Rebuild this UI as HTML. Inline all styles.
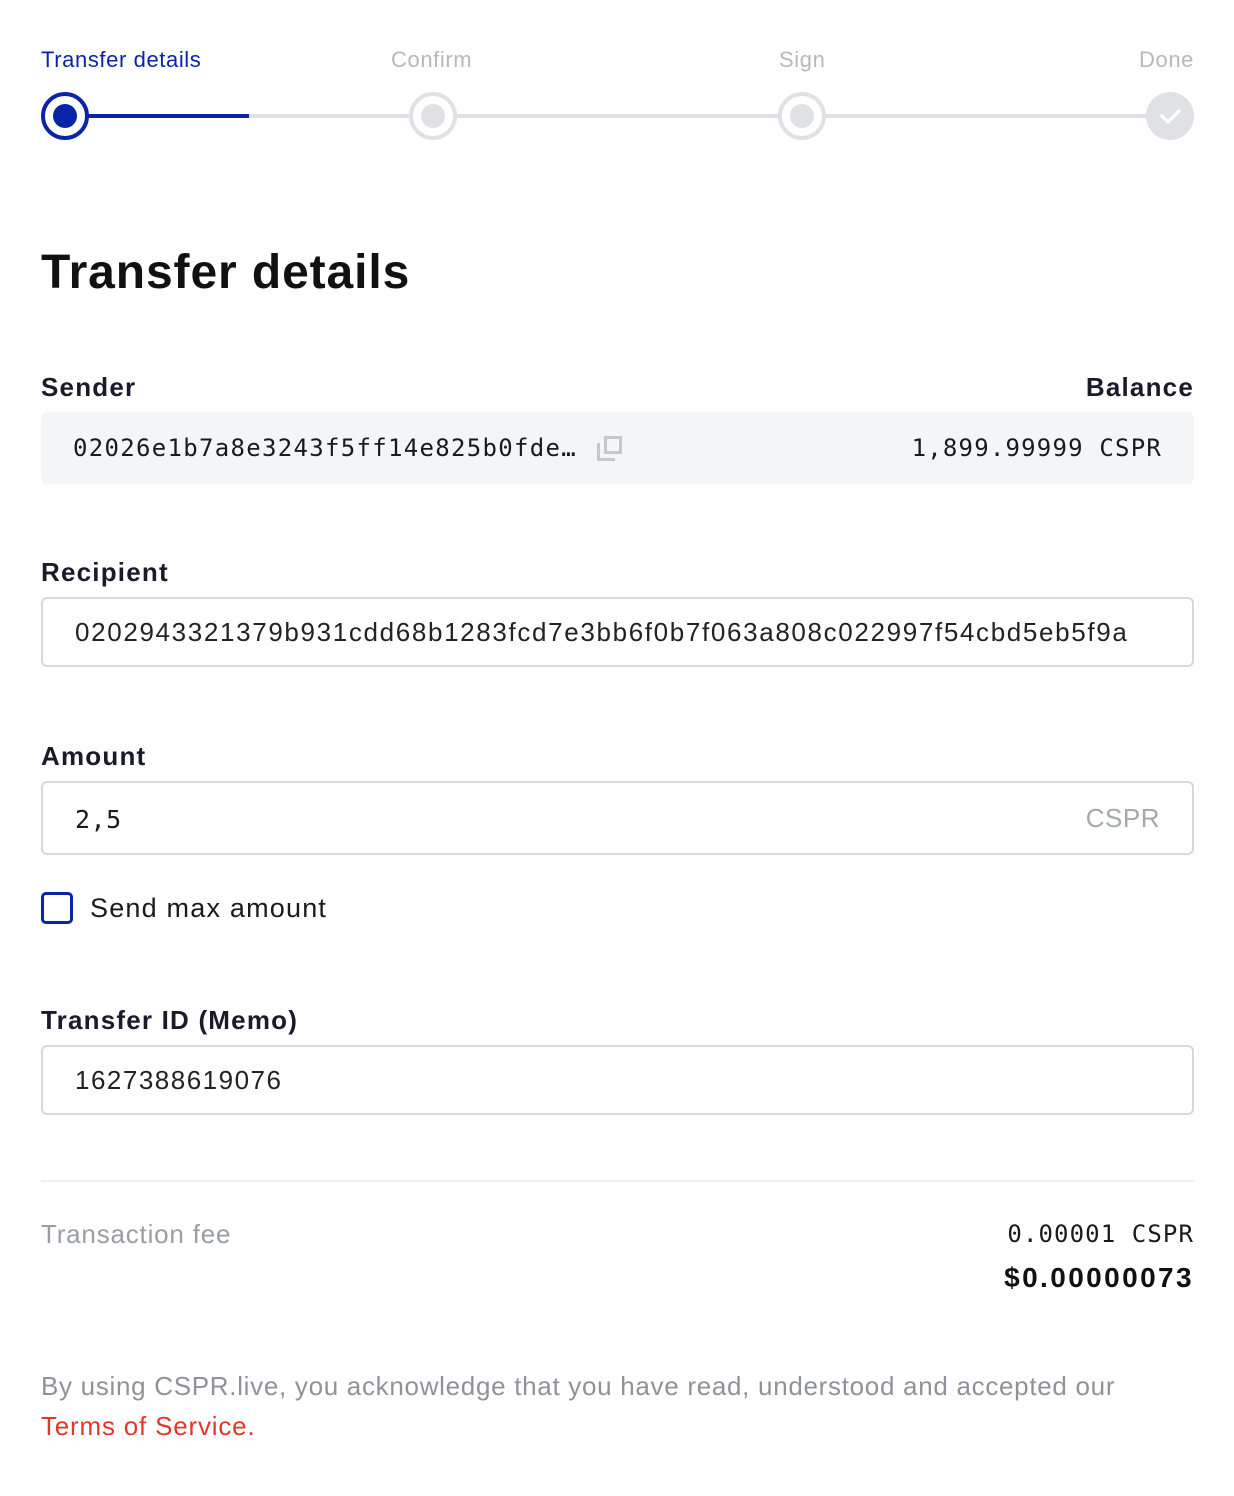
<!DOCTYPE html>
<html><head><style>
*{margin:0;padding:0;box-sizing:border-box}
body{width:1234px;height:1496px;background:#fff;font-family:"Liberation Sans",sans-serif;color:#1a1a1a;position:relative;overflow:hidden}
.a{position:absolute;white-space:nowrap}
.mono{font-family:"DejaVu Sans Mono","Liberation Mono",monospace}
.lbl{font-size:26px;font-weight:bold;color:#1a1a2a;letter-spacing:1.2px}
.inp{position:absolute;left:41px;width:1153px;border:2px solid #d6d8dc;border-radius:6px}
.step{position:absolute;top:92px;width:48px;height:48px;border-radius:50%;border:4px solid #dfe1e4;background:#fff}
.step i{position:absolute;left:8px;top:8px;width:24px;height:24px;border-radius:50%;background:#dfe1e4}
.sl{font-size:22px;letter-spacing:0.6px;top:47px}
</style></head><body>
<div class="a sl" style="left:41px;color:#0a24a8">Transfer details</div>
<div class="a sl" style="left:391px;color:#b5b8bd">Confirm</div>
<div class="a sl" style="left:779px;color:#b5b8bd">Sign</div>
<div class="a sl" style="right:40px;color:#b5b8bd">Done</div>
<div class="a" style="left:65px;top:114px;width:1105px;height:4px;background:#dfe1e4"></div>
<div class="a" style="left:65px;top:114px;width:184px;height:4px;background:#0a24a8"></div>
<div class="step" style="left:41px;border-color:#0a24a8"><i style="background:#0a24a8"></i></div>
<div class="step" style="left:409px"><i></i></div>
<div class="step" style="left:778px"><i></i></div>
<div class="step" style="left:1146px;background:#dfe1e4;border:none">
<svg width="48" height="48" viewBox="0 0 48 48" style="position:absolute;left:0;top:0"><path d="M16 24l6 6 11-11" stroke="#fff" stroke-width="3.5" fill="none" stroke-linecap="round" stroke-linejoin="round"/></svg></div>

<div class="a" style="left:41px;top:245px;font-size:48px;font-weight:bold;color:#111;letter-spacing:0.9px">Transfer details</div>

<div class="a lbl" style="left:41px;top:372px">Sender</div>
<div class="a lbl" style="right:40px;top:372px">Balance</div>
<div class="a" style="left:41px;top:412px;width:1153px;height:72px;background:#f4f5f7;border-radius:6px"></div>
<div class="a mono" style="left:73px;top:434px;font-size:24px;letter-spacing:1.3px">02026e1b7a8e3243f5ff14e825b0fde…</div>
<div class="a" style="left:597px;top:436px;width:26px;height:26px">
<div style="position:absolute;left:7px;top:0;width:18px;height:18px;border:3px solid #c5c7cb"></div>
<div style="position:absolute;left:0;top:7px;width:18px;height:18px;border:3px solid #c5c7cb;border-top:none;border-right:none"></div></div>
<div class="a mono" style="right:72px;top:434px;font-size:24px;letter-spacing:1.2px">1,899.99999 CSPR</div>

<div class="a lbl" style="left:41px;top:557px">Recipient</div>
<div class="inp" style="top:597px;height:70px"></div>
<div class="a" style="left:75px;top:617px;font-size:26px;color:#222;letter-spacing:1.65px">0202943321379b931cdd68b1283fcd7e3bb6f0b7f063a808c022997f54cbd5eb5f9a</div>

<div class="a lbl" style="left:41px;top:741px">Amount</div>
<div class="inp" style="top:781px;height:74px"></div>
<div class="a mono" style="left:75px;top:805px;font-size:25px;letter-spacing:0.5px">2,5</div>
<div class="a" style="right:74px;top:803px;font-size:26px;color:#a5a8ad;letter-spacing:0.5px">CSPR</div>

<div class="a" style="left:41px;top:892px;width:32px;height:32px;border:3px solid #0a24a8;border-radius:5px"></div>
<div class="a" style="left:90px;top:893px;font-size:27px;color:#1a1a1a;letter-spacing:1.2px">Send max amount</div>

<div class="a lbl" style="left:41px;top:1005px">Transfer ID (Memo)</div>
<div class="inp" style="top:1045px;height:70px"></div>
<div class="a" style="left:75px;top:1065px;font-size:26px;color:#222;letter-spacing:1.5px">1627388619076</div>

<div class="a" style="left:41px;top:1180px;width:1153px;height:2px;background:#eeeff1"></div>
<div class="a" style="left:41px;top:1219px;font-size:26px;color:#9a9da3;letter-spacing:0.8px">Transaction fee</div>
<div class="a mono" style="right:40px;top:1220px;font-size:24px;letter-spacing:1.1px">0.00001 CSPR</div>
<div class="a" style="right:40px;top:1262px;font-size:28px;font-weight:bold;color:#111;letter-spacing:2.4px">$0.00000073</div>

<div class="a" style="left:41px;top:1371px;font-size:26px;color:#8f9399;letter-spacing:0.7px">By using CSPR.live, you acknowledge that you have read, understood and accepted our</div>
<div class="a" style="left:41px;top:1411px;font-size:26px;color:#e0392b;letter-spacing:0.8px">Terms of Service.</div>
</body></html>
